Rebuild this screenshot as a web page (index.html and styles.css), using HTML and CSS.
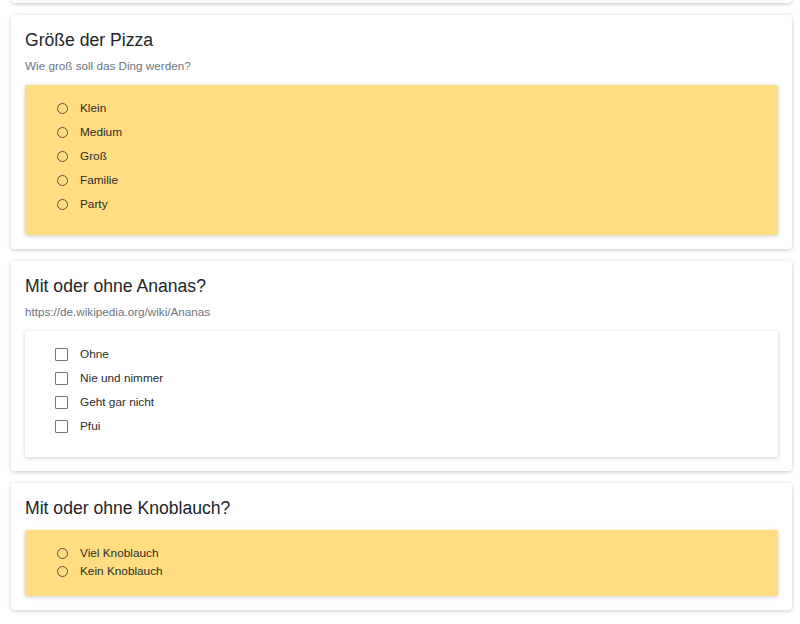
FILE: index.html
```html
<!DOCTYPE html>
<html lang="de">
<head>
<meta charset="utf-8">
<title>Pizza</title>
<link rel="stylesheet" href="styles.css">
</head>
<body>
<div class="page">
  <div class="card card-prev"></div>

  <section class="card">
    <h2 class="title">Größe der Pizza</h2>
    <p class="subtitle">Wie groß soll das Ding werden?</p>
    <div class="options yellow">
      <label class="option"><span class="radio"></span>Klein</label>
      <label class="option"><span class="radio"></span>Medium</label>
      <label class="option"><span class="radio"></span>Groß</label>
      <label class="option"><span class="radio"></span>Familie</label>
      <label class="option"><span class="radio"></span>Party</label>
    </div>
  </section>

  <section class="card">
    <h2 class="title">Mit oder ohne Ananas?</h2>
    <p class="subtitle">https://de.wikipedia.org/wiki/Ananas</p>
    <div class="options white">
      <label class="option check"><span class="checkbox"></span>Ohne</label>
      <label class="option check"><span class="checkbox"></span>Nie und nimmer</label>
      <label class="option check"><span class="checkbox"></span>Geht gar nicht</label>
      <label class="option check"><span class="checkbox"></span>Pfui</label>
    </div>
  </section>

  <section class="card">
    <h2 class="title title-only">Mit oder ohne Knoblauch?</h2>
    <div class="options yellow compact">
      <label class="option"><span class="radio"></span>Viel Knoblauch</label>
      <label class="option"><span class="radio"></span>Kein Knoblauch</label>
    </div>
  </section>
</div>
</body>
</html>
```
FILE: styles.css
```css
html, body {
  margin: 0;
  padding: 0;
  background: #ffffff;
  font-family: "Liberation Sans", Arial, sans-serif;
  color: #333333;
}

.page {
  padding: 0 8px 0 11px;
  overflow: hidden;
  height: 624px;
  box-sizing: border-box;
}

.card {
  background: #ffffff;
  border-radius: 4px;
  box-shadow: 0 1px 4px rgba(0, 0, 0, 0.22);
  padding: 14px;
  margin-bottom: 12px;
}

.card-prev {
  margin-top: -40px;
  height: 43px;
  padding: 0;
}

.title {
  font-size: 17.6px;
  line-height: 22px;
  font-weight: normal;
  color: #212529;
  margin: 0 0 7px 0;
}

.title-only {
  margin-bottom: 11px;
}

.subtitle {
  font-size: 11.7px;
  line-height: 15px;
  color: #6c757d;
  margin: 0 0 12px 0;
}

.options {
  border-radius: 2px;
  box-shadow: 0 1px 4px rgba(0, 0, 0, 0.2);
  padding: 11px 0 19px 0;
}

.yellow {
  background: #ffdd80;
}

.white {
  background: #ffffff;
}

.compact {
  padding: 14px 0 16px 0;
}

.option {
  display: flex;
  align-items: center;
  height: 24px;
  padding-left: 32px;
  font-size: 11.8px;
  color: #2b2b2b;
}

.compact .option {
  height: 18px;
}

.option.check {
  padding-left: 30px;
}

.radio {
  width: 9px;
  height: 9px;
  border: 1.5px solid #505050;
  border-radius: 50%;
  margin-right: 12px;
  flex: none;
}

.checkbox {
  width: 11px;
  height: 11px;
  border: 1px solid #767676;
  border-radius: 1px;
  background: #ffffff;
  margin-right: 12px;
  flex: none;
}
```
